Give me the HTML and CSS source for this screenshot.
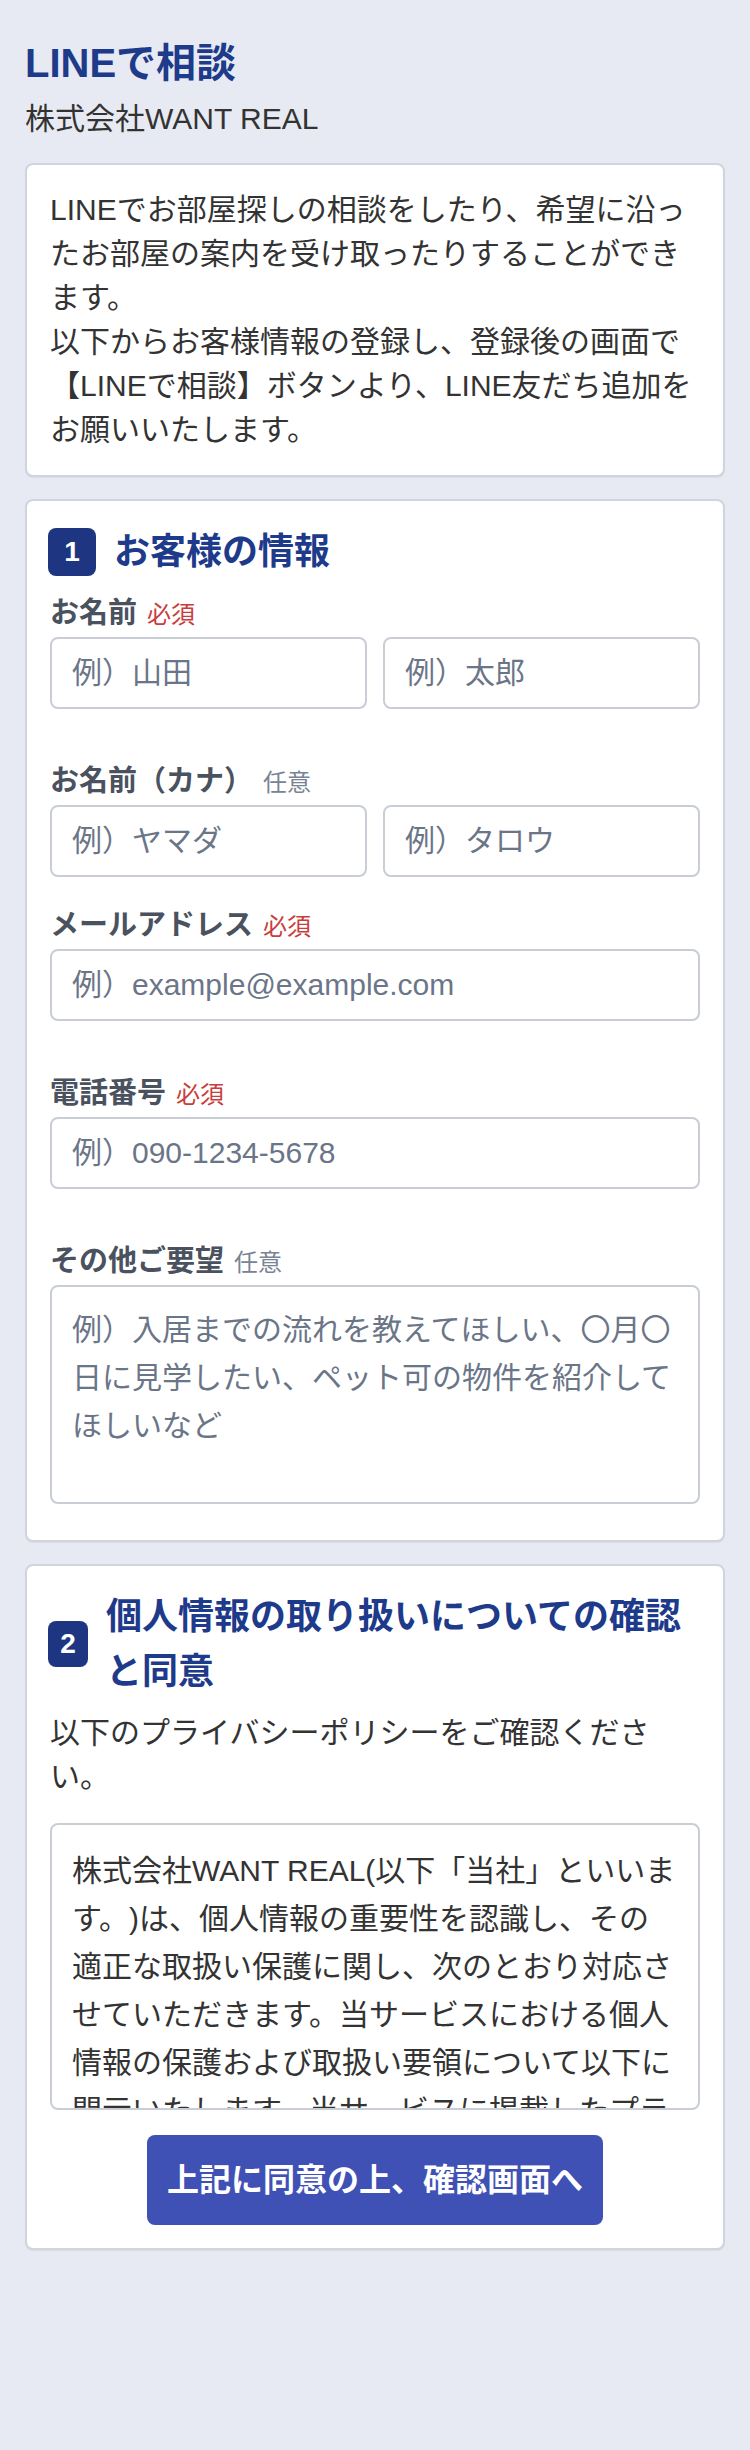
FILE: index.html
```html
<!DOCTYPE html>
<html lang="ja">
<head>
<meta charset="utf-8">
<title>LINEで相談</title>
<link rel="stylesheet" href="styles.css">
</head>
<body>
<main class="page">
  <h1 class="title">LINEで相談</h1>
  <p class="company">株式会社WANT REAL</p>

  <section class="card">
    <p class="text">LINEでお部屋探しの相談をしたり、希望に沿ったお部屋の案内を受け取ったりすることができます。<br>以下からお客様情報の登録し、登録後の画面で【LINEで相談】ボタンより、LINE友だち追加をお願いいたします。</p>
  </section>

  <form class="card">
    <h2 class="section-head"><span class="badge">1</span><span class="section-title">お客様の情報</span></h2>

    <div class="field field--req">
      <label class="label">お名前<span class="tag tag--req">必須</span></label>
      <div class="pair">
        <input class="input" type="text" placeholder="例）山田">
        <input class="input" type="text" placeholder="例）太郎">
      </div>
    </div>

    <div class="field">
      <label class="label">お名前（カナ）<span class="tag tag--opt">任意</span></label>
      <div class="pair">
        <input class="input" type="text" placeholder="例）ヤマダ">
        <input class="input" type="text" placeholder="例）タロウ">
      </div>
    </div>

    <div class="field field--req">
      <label class="label">メールアドレス<span class="tag tag--req">必須</span></label>
      <input class="input" type="email" placeholder="例）example@example.com">
    </div>

    <div class="field field--req">
      <label class="label">電話番号<span class="tag tag--req">必須</span></label>
      <input class="input" type="tel" placeholder="例）090-1234-5678">
    </div>

    <div class="field field--last">
      <label class="label">その他ご要望<span class="tag tag--opt">任意</span></label>
      <textarea class="textarea" placeholder="例）入居までの流れを教えてほしい、〇月〇日に見学したい、ペット可の物件を紹介してほしいなど"></textarea>
    </div>
  </form>

  <section class="card">
    <h2 class="section-head"><span class="badge badge--narrow">2</span><span class="section-title">個人情報の取り扱いについての確認と同意</span></h2>
    <p class="text lead">以下のプライバシーポリシーをご確認ください。</p>
    <div class="policy">
      <p class="policy-text">株式会社WANT REAL(以下「当社」といいます。)は、個人情報の重要性を認識し、その適正な取扱い保護に関し、次のとおり対応させていただきます。当サービスにおける個人情報の保護および取扱い要領について以下に開示いたします。当サービスに掲載したプライバシーポリシーの内容は、法令その他の規範の変更に応じて、予告なく変更することがあります。</p>
      <p class="policy-text">1. 個人情報の取得について<br>当社は、適法かつ公正な手段によって個人情報を取得いたします。</p>
      <p class="policy-text">2. 個人情報の利用目的について<br>当社は、取得した個人情報を、お部屋探しのご相談、物件のご案内、その他これらに付随する業務のために利用いたします。</p>
    </div>
    <div class="actions">
      <button class="submit" type="button">上記に同意の上、確認画面へ</button>
    </div>
  </section>
</main>
</body>
</html>
```

FILE: styles.css
```css
* {
  box-sizing: border-box;
  text-spacing-trim: space-all;
}

body {
  margin: 0;
  background: #e7eaf2;
  font-family: "Liberation Sans", "Noto Sans CJK JP", sans-serif;
  color: #333333;
}

.page {
  padding: 35px 25px 40px;
}

.title {
  margin: 0;
  font-size: 40px;
  line-height: 56px;
  font-weight: 700;
  color: #1e3a8a;
}

.company {
  margin: 6px 0 0;
  font-size: 30px;
  line-height: 44px;
  color: #333333;
}

.card {
  margin-top: 22px;
  background: #ffffff;
  border: 2px solid #d0d4dc;
  border-radius: 8px;
  padding: 23px;
  box-shadow: 0 1px 1px rgba(0, 0, 0, 0.06);
}

.text {
  margin: 0;
  font-size: 30px;
  line-height: 44px;
  color: #333333;
}

.section-head {
  display: flex;
  align-items: center;
  gap: 18px;
  margin: 0 0 12px;
  font-size: 36px;
  line-height: 55px;
  font-weight: 700;
  color: #1e3a8a;
}

.badge {
  flex: none;
  width: 48px;
  height: 48px;
  margin-left: -2px;
  border-radius: 8px;
  background: #1e3581;
  color: #ffffff;
  font-size: 28px;
  line-height: 48px;
  text-align: center;
  font-weight: 700;
}

.badge--narrow {
  width: 40px;
  height: 46px;
  line-height: 46px;
}

.field {
  margin-bottom: 26px;
}

.field--req {
  padding-bottom: 24px;
}

.field--last {
  margin-bottom: 13px;
}

.label {
  display: block;
  height: 44px;
  margin-bottom: 2px;
  font-size: 29px;
  line-height: 44px;
  font-weight: 700;
  color: #49525e;
}

.tag {
  margin-left: 10px;
  font-size: 24px;
  line-height: 1;
  font-weight: 400;
}

.tag--req {
  color: #c93d3d;
}

.tag--opt {
  color: #7a8394;
}

.pair {
  display: grid;
  grid-template-columns: 1fr 1fr;
  gap: 16px;
}

.input,
.textarea {
  display: block;
  width: 100%;
  min-width: 0;
  margin: 0;
  border: 2px solid #c8cdd6;
  border-radius: 8px;
  background: #ffffff;
  font-family: "Liberation Sans", "Noto Sans CJK JP", sans-serif;
  font-size: 30px;
  color: #333333;
}

.input {
  height: 72px;
  padding: 0 20px;
}

.textarea {
  height: 219px;
  padding: 19px 18px 19px 20px;
  line-height: 48px;
  resize: none;
}

.input::placeholder,
.textarea::placeholder {
  color: #6b7588;
  opacity: 1;
}

.lead {
  margin-bottom: 24px;
}

.policy {
  height: 287px;
  border: 2px solid #c8cdd6;
  border-radius: 8px;
  padding: 22px 20.5px 0 20px;
  overflow-y: auto;
  scrollbar-width: none;
}

.policy::-webkit-scrollbar {
  display: none;
}

.policy-text {
  margin: 0;
  font-size: 30px;
  line-height: 48px;
  color: #333333;
}

.actions {
  display: flex;
  justify-content: center;
  margin-top: 25px;
}

.submit {
  border: 0;
  border-radius: 8px;
  background: #3f51b5;
  color: #ffffff;
  font-family: "Liberation Sans", "Noto Sans CJK JP", sans-serif;
  font-size: 32px;
  line-height: 46px;
  font-weight: 700;
  padding: 22px 20px;
}
```
